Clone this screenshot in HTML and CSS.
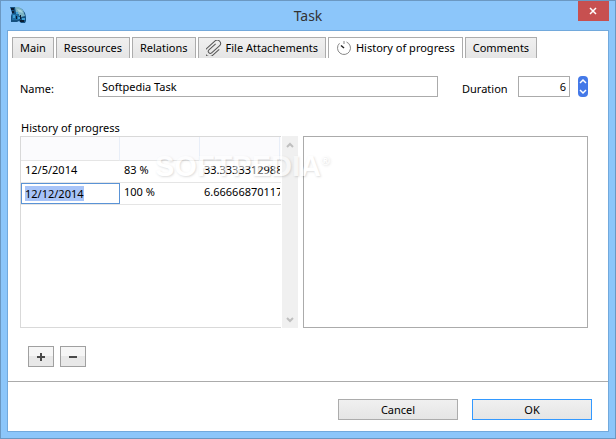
FILE: index.html
```html
<!DOCTYPE html>
<html lang="en">
<head>
  <meta charset="UTF-8">
  <meta name="viewport" content="width=device-width, initial-scale=1.0">
  <title>Task</title>
  <link rel="stylesheet" href="styles.css">
</head>
<body>
  <div class="window">
    <header class="titlebar">
      <svg class="app-icon" viewBox="0 0 16 16" aria-hidden="true">
        <path d="M0 0h6l6 2 3 4 1 4v4l-1 2h-4l-2-2-2 1H1V9l1-3z" fill="#15507f"/>
        <path d="M5 0h4l4 3 2 6-4 1-5-4z" fill="#7bb3c6"/>
        <path d="M7 2l4 1 2 3-4-1z" fill="#a5d2de"/>
        <path d="M2 7h7v6H2z" fill="#1f6da3"/>
        <path d="M3 8h2v3H3zM6 5h2v2H6zM8 10h2v2H8zM12 11h3v2h-3z" fill="#3f9fd6"/>
        <path d="M1 1h3v2H1zM2 4h2v2H2zM6 9h1v3H6zM10 13h4v2h-4zM10 8h1v4h-1z" fill="#0a1c30"/>
      </svg>
      <h1 class="title">Task</h1>
      <button class="close" type="button" aria-label="Close">
        <svg viewBox="0 0 8 8" aria-hidden="true"><path d="M1 1l6 6M7 1L1 7"/></svg>
      </button>
    </header>

    <main class="dialog">
      <nav class="tabs" role="tablist">
        <button class="tab" type="button" role="tab">Main</button>
        <button class="tab" type="button" role="tab">Ressources</button>
        <button class="tab" type="button" role="tab">Relations</button>
        <button class="tab" type="button" role="tab">
          <svg class="tab-icon" viewBox="0 0 16 16" aria-hidden="true">
            <path transform="rotate(-42 8 8)" d="M12 6H3a2 2 0 0 0 0 4h10.500a3.250 3.250 0 0 0 0-6.500H2a4.500 4.500 0 0 0 0 9h9"/>
          </svg>
          File Attachements
        </button>
        <button class="tab active" type="button" role="tab" aria-selected="true">
          <svg class="tab-icon" viewBox="0 0 16 16" aria-hidden="true">
            <path class="dial" d="M8 1v3M10.500 2A6.500 6.500 0 1 1 3.500 3.300"/>
            <path class="hand" d="M5 5.500l3 2.500"/>
          </svg>
          History of progress
        </button>
        <button class="tab" type="button" role="tab">Comments</button>
      </nav>

      <div class="fields">
        <label class="name-label" for="name">Name:</label>
        <input class="name" id="name" type="text" value="Softpedia Task">
        <label class="duration-label" for="duration">Duration</label>
        <input class="duration" id="duration" type="text" value="6">
        <button class="stepper" type="button" aria-label="Change duration">
          <svg viewBox="0 0 10 21" aria-hidden="true"><path d="M2 7l3-3 3 3M2 14l3 3 3-3"/></svg>
        </button>
      </div>

      <h2 class="heading">History of progress</h2>
      <div class="history">
        <div class="list">
          <table class="grid">
            <thead>
              <tr><th></th><th></th><th></th><th></th></tr>
            </thead>
            <tbody>
              <tr><td>12/5/2014</td><td>83 %</td><td>33.3333312988</td><td></td></tr>
              <tr>
                <td class="editing"><input class="cell-input" type="text" value="12/12/2014" aria-label="Date"></td>
                <td>100 %</td><td>6.66666870117</td><td></td>
              </tr>
            </tbody>
          </table>
        </div>
        <div class="scrollbar">
          <svg viewBox="0 0 8 6" aria-hidden="true"><path d="M1 5l3-3 3 3"/></svg>
          <svg viewBox="0 0 8 6" aria-hidden="true"><path d="M1 1l3 3 3-3"/></svg>
        </div>
        <div class="detail"></div>
        <div class="watermark">SOFTPEDIA<sup>®</sup></div>
      </div>

      <div class="row-actions">
        <button class="small-button" type="button" aria-label="Add">
          <svg viewBox="0 0 8 8" aria-hidden="true"><path d="M0 4h8M4 0v8"/></svg>
        </button>
        <button class="small-button" type="button" aria-label="Remove">
          <svg viewBox="0 0 8 8" aria-hidden="true"><path d="M0 4h8"/></svg>
        </button>
      </div>

      <footer class="footer">
        <button class="button" type="button">Cancel</button>
        <button class="button primary" type="button">OK</button>
      </footer>
    </main>
  </div>

  <script>
    const cellInput = document.querySelector(".cell-input");
    cellInput.focus();
    cellInput.select();
  </script>
</body>
</html>
```
FILE: styles.css
```css
* {
  box-sizing: border-box;
}

body {
  margin: 0;
  font-family: "Noto Sans", "Open Sans", sans-serif;
  font-size: 11px;
  line-height: 16px;
  color: #000;
}

button,
input {
  font: inherit;
  color: inherit;
  margin: 0;
  padding: 0;
  border-radius: 0;
}

svg {
  fill: none;
}

.window {
  display: flex;
  flex-direction: column;
  min-height: 100vh;
  padding: 0 6px 6px;
  background: #8cc6fa;
  border: 1px solid #6b98c2;
}

.titlebar {
  display: flex;
  align-items: flex-start;
  justify-content: space-between;
  height: 29px;
}

.app-icon {
  width: 16px;
  height: 16px;
  margin: 6px 0 0 3px;
}

.title {
  margin: 4px 0 0 12px;
  font-size: 14px;
  font-weight: normal;
  line-height: 21px;
  color: #333;
}

.close {
  display: flex;
  align-items: center;
  justify-content: center;
  width: 31px;
  height: 20px;
  background: #c75050;
  border: none;
}

.close svg {
  width: 8px;
  height: 8px;
  stroke: #fff;
  stroke-width: 1.5;
}

.dialog {
  flex: 1;
  display: flex;
  flex-direction: column;
  background: #fff;
  border: 1px solid #72a9dc;
}

.tabs {
  display: flex;
  gap: 2px;
  padding: 6px 4px 0;
}

.tab {
  display: flex;
  align-items: center;
  justify-content: center;
  gap: 4px;
  height: 21px;
  padding: 0 7px;
  white-space: nowrap;
  background: linear-gradient(#f0f0f0, #e5e5e5);
  border: 1px solid #acacac;
  border-bottom: none;
}

.tab.active {
  background: #fff;
}

.tab-icon {
  width: 16px;
  height: 16px;
  stroke: #555;
}

.dial {
  stroke: #888;
}

.hand {
  stroke: #222;
  stroke-width: 1.5;
}

.fields {
  display: flex;
  align-items: center;
  padding: 18px 20px 0 12px;
}

.name-label {
  width: 78px;
  padding-top: 4px;
}

.name,
.duration {
  height: 21px;
  padding: 0 3px;
  border: 1px solid #ababab;
  background: #fff;
}

.name {
  flex: 1;
  min-width: 0;
}

.duration-label {
  width: 80px;
  padding: 4px 0 0 24px;
}

.duration {
  width: 52px;
  text-align: right;
}

.stepper {
  width: 10px;
  height: 21px;
  margin-left: 8px;
  background: #4479e8;
  border: none;
  border-radius: 4px;
}

.stepper svg {
  display: block;
  stroke: #fff;
  stroke-width: 1.5;
}

.heading {
  margin: 23px 0 0 13px;
  font-size: 11px;
  font-weight: normal;
}

.history {
  position: relative;
  flex: 1;
  display: flex;
  padding: 0 20px 0 12px;
}

.list {
  width: 261px;
  border: 1px solid #d9d9d9;
  border-right: none;
}

.grid {
  width: 100%;
  table-layout: fixed;
  border-collapse: separate;
  border-spacing: 0;
}

.grid th {
  width: 80px;
  height: 24px;
  padding: 0;
  background: #fbfbfd;
  border-right: 1px solid #e8eef8;
  border-bottom: 1px solid #e5e5e5;
}

.grid th:first-child {
  width: 99px;
}

.grid th:last-child {
  width: auto;
  border-right: none;
}

.grid td {
  height: 22px;
  padding: 0 0 4px 4px;
  overflow: hidden;
  white-space: nowrap;
  border-bottom: 1px solid #e5e5e5;
}

.grid td:last-child {
  padding: 0;
}

.grid .editing {
  padding: 0;
}

.cell-input {
  display: block;
  width: 100%;
  height: 21px;
  padding: 0 3px;
  border: 1px solid #5a93d6;
  outline: none;
}

.cell-input::selection {
  color: #000;
  background: #a8c4f8;
}

.scrollbar {
  display: flex;
  flex-direction: column;
  align-items: center;
  justify-content: space-between;
  width: 16px;
  margin-left: 1px;
  padding: 6px 0 5px;
  background: #f0f0f0;
}

.scrollbar svg {
  width: 8px;
  height: 6px;
  stroke: #bfbfbf;
  stroke-width: 2;
}

.detail {
  flex: 1;
  margin-left: 5px;
  border: 1px solid #ababab;
}

.watermark {
  position: absolute;
  top: 13px;
  left: 147px;
  font-family: "Liberation Sans", sans-serif;
  font-size: 29px;
  font-weight: bold;
  line-height: 34px;
  color: #fff;
  text-shadow: 1px 1px 2px rgba(0, 0, 0, 0.25);
  opacity: 0.5;
  pointer-events: none;
}

.watermark sup {
  font-size: 12px;
  line-height: 12px;
}

.row-actions {
  display: flex;
  gap: 6px;
  padding: 18px 20px 14px;
}

.small-button {
  display: flex;
  align-items: center;
  justify-content: center;
  width: 26px;
  height: 21px;
  background: linear-gradient(#f6f6f6 50%, #e8e8e8 50%);
  border: 1px solid #a0a0a0;
}

.small-button svg {
  width: 8px;
  height: 8px;
  stroke: #4a4a4a;
  stroke-width: 2;
}

.footer {
  display: flex;
  justify-content: flex-end;
  gap: 14px;
  padding: 17px 16px 11px;
  border-top: 1px solid #ababab;
}

.button {
  width: 120px;
  height: 21px;
  background: linear-gradient(#f0f0f0, #e5e5e5);
  border: 1px solid #acacac;
}

.button.primary {
  border-color: #3399ff;
}
```
